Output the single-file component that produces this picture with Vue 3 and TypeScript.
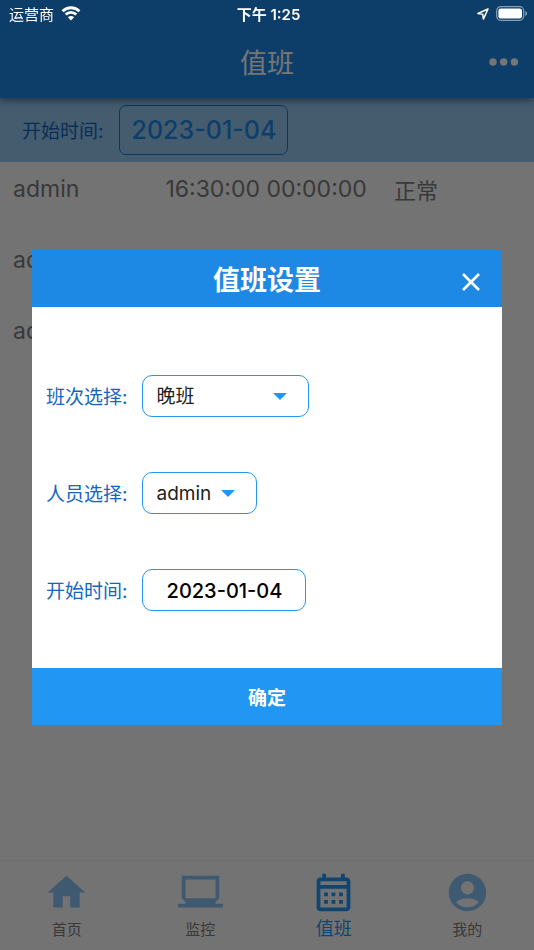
<script setup lang="ts">
import { ref } from 'vue'

interface Shift {
  name: string
  time: string
  state: string
}

interface Tab {
  label: string
  icon: string
}

const shifts: Shift[] = [
  { name: 'admin', time: '16:30:00 00:00:00', state: '正常' },
  { name: 'admin', time: '', state: '' },
  { name: 'admin', time: '', state: '' },
]

const tabs: Tab[] = [
  { label: '首页', icon: 'M10 20v-6h4v6h5v-8h3L12 3 2 12h3v8z' },
  { label: '监控', icon: 'M20 18v-1l2-2V3H2v12l2 2v1H0v2h24v-2h-4zM4 5h16v10H4V5z' },
  {
    label: '值班',
    icon: 'M19 4h-1V2h-2v2H8V2H6v2H5c-1.11 0-1.99.9-1.99 2L3 20c0 1.1.89 2 2 2h14c1.1 0 2-.9 2-2V6c0-1.1-.9-2-2-2zm0 16H5V10h14v10zm0-12H5V6h14v2zM9 14H7v-2h2v2zm4 0h-2v-2h2v2zm4 0h-2v-2h2v2zm-8 4H7v-2h2v2zm4 0h-2v-2h2v2zm4 0h-2v-2h2v2z',
  },
  {
    label: '我的',
    icon: 'M12 2C6.48 2 2 6.48 2 12s4.48 10 10 10 10-4.48 10-10S17.52 2 12 2zm0 4c1.93 0 3.5 1.57 3.5 3.5S13.93 13 12 13s-3.5-1.57-3.5-3.5S10.07 6 12 6zm0 14c-2.03 0-4.43-.82-6.14-2.88C7.55 15.8 9.68 15 12 15s4.45.8 6.14 2.12C16.43 19.18 14.03 20 12 20z',
  },
]

const activeTab = ref('值班')
const open = ref(true)
const filterDate = ref('2023-01-04')
const shift = ref('晚班')
const person = ref('admin')
const startDate = ref('2023-01-04')
</script>

<template>
  <div class="page">
    <div class="status">
      <div class="carrier">
        <span>运营商</span>
        <svg class="wifi" viewBox="0 0 20 15" aria-hidden="true">
          <path d="M1.6 5.2a12 12 0 0 1 16.8 0M4.7 8.5a7.5 7.5 0 0 1 10.6 0" />
          <path class="dot" d="M6.9 11.2a4.4 4.4 0 0 1 6.2 0L10 14.4z" />
        </svg>
      </div>
      <span class="clock">下午 1:25</span>
      <div class="power">
        <svg class="arrow" viewBox="0 0 12 12" aria-hidden="true">
          <path d="M11 1 .9 5.5l4.9.8.6 4.8z" />
        </svg>
        <svg class="battery" viewBox="0 0 32 15" aria-hidden="true">
          <rect class="shell" x="0.7" y="0.7" width="27" height="13.6" rx="4" />
          <rect class="charge" x="2.4" y="2.4" width="23.6" height="10.2" rx="2.4" />
          <path class="tip" d="M29.3 5v5c1.1-.4 1.8-1.4 1.8-2.5s-.7-2.1-1.8-2.5z" />
        </svg>
      </div>
    </div>

    <header class="bar">
      <h1>值班</h1>
      <button class="more" type="button" aria-label="更多" @click="open = true">
        <svg viewBox="0 0 30 8" aria-hidden="true">
          <circle cx="4" cy="4" r="3.7" />
          <circle cx="14.7" cy="4" r="3.7" />
          <circle cx="25.4" cy="4" r="3.7" />
        </svg>
      </button>
    </header>

    <div class="filter">
      <label for="filter-date">开始时间:</label>
      <input id="filter-date" v-model="filterDate" type="text" readonly />
    </div>

    <main class="list">
      <table>
        <tbody>
          <tr v-for="(row, i) in shifts" :key="i">
            <td class="name">{{ row.name }}</td>
            <td class="time">{{ row.time }}</td>
            <td class="state">{{ row.state }}</td>
          </tr>
        </tbody>
      </table>
    </main>

    <nav class="tabs">
      <button
        v-for="tab in tabs"
        :key="tab.label"
        type="button"
        class="tab"
        :class="{ active: tab.label === activeTab }"
        @click="activeTab = tab.label"
      >
        <svg viewBox="0 0 24 24" aria-hidden="true"><path :d="tab.icon" /></svg>
        <span>{{ tab.label }}</span>
      </button>
    </nav>

    <div v-if="open" class="scrim">
      <form class="dialog" role="dialog" aria-labelledby="dialog-title" @submit.prevent="open = false">
        <div class="dialog-head">
          <h2 id="dialog-title">值班设置</h2>
          <button class="close" type="button" aria-label="关闭" @click="open = false">
            <svg viewBox="0 0 20 20" aria-hidden="true"><path d="m2 2 16 16M18 2 2 18" /></svg>
          </button>
        </div>
        <div class="fields">
          <div class="field">
            <label for="shift">班次选择:</label>
            <div class="box wide">
              <select id="shift" v-model="shift">
                <option>晚班</option>
              </select>
              <svg viewBox="0 0 14 8" aria-hidden="true"><path d="M0 0h14L7 7z" /></svg>
            </div>
          </div>
          <div class="field">
            <label for="person">人员选择:</label>
            <div class="box">
              <select id="person" v-model="person">
                <option>admin</option>
              </select>
              <svg viewBox="0 0 14 8" aria-hidden="true"><path d="M0 0h14L7 7z" /></svg>
            </div>
          </div>
          <div class="field">
            <label for="start-date">开始时间:</label>
            <input id="start-date" v-model="startDate" class="date" type="text" readonly />
          </div>
        </div>
        <button class="confirm" type="submit">确定</button>
      </form>
    </div>
  </div>
</template>

<style>
body {
  margin: 0;
  background: #fafafa;
}
</style>

<style scoped>
.page {
  min-height: 100vh;
  display: flex;
  flex-direction: column;
  font-family: Inter, 'Noto Sans CJK SC', sans-serif;
  color: #7c7c7c;
  background: #fafafa;
}

.page *,
.page {
  box-sizing: border-box;
}

button,
input,
select {
  font-family: inherit;
  margin: 0;
}

button {
  border: 0;
  padding: 0;
  background: none;
  cursor: pointer;
}

h1,
h2 {
  grid-column: 2;
  margin: 0;
  padding-top: 4px;
  font-size: 27px;
  line-height: 36px;
}

svg {
  display: block;
}

.status {
  position: fixed;
  inset: 0 0 auto;
  z-index: 3;
  display: grid;
  grid-template-columns: 1fr auto 1fr;
  align-items: center;
  height: 27px;
  padding: 0 6px 0 9px;
  font-size: 15px;
  color: #fff;
}

.carrier,
.power {
  display: flex;
  align-items: center;
  gap: 7px;
}

.power {
  justify-content: flex-end;
}

.clock {
  font-weight: 600;
}

.wifi {
  width: 20px;
  height: 15px;
  fill: none;
  stroke: #fff;
  stroke-width: 2.8;
}

.wifi .dot {
  fill: #fff;
  stroke: none;
}

.arrow {
  width: 12px;
  height: 12px;
  fill: none;
  stroke: #fff;
  stroke-width: 1.5;
  stroke-linejoin: round;
}

.battery {
  width: 32px;
  height: 15px;
}

.shell {
  fill: none;
  stroke: #87a0b7;
  stroke-width: 1.2;
}

.charge {
  fill: #fff;
}

.tip {
  fill: #87a0b7;
}

.bar {
  position: relative;
  z-index: 1;
  display: grid;
  grid-template-columns: 1fr auto 1fr;
  align-items: center;
  height: 98px;
  padding: 26px 15px 0;
  background: #1e88e5;
  box-shadow: 0 2px 8px rgba(0, 0, 0, 0.5);
}

.bar h1 {
  font-weight: 400;
  color: #fff;
}

.more {
  justify-self: end;
  padding: 8px 0;
}

.more svg {
  width: 30px;
  height: 8px;
  fill: #fff;
}

.filter {
  display: flex;
  align-items: center;
  gap: 16px;
  height: 64px;
  padding: 0 22px;
  background: #96c8f2;
}

.filter label {
  padding-bottom: 2px;
  font-size: 19px;
  color: #1565c0;
}

.filter input {
  width: 169px;
  height: 50px;
  padding: 0;
  border: 1px solid #1976d2;
  border-radius: 7px;
  background: none;
  font-size: 25px;
  font-weight: 500;
  text-align: center;
  color: #1e88e5;
}

.list {
  flex: 1;
  padding: 0 13px;
}

table {
  width: 100%;
  border-collapse: collapse;
  table-layout: fixed;
}

td {
  height: 71px;
  padding: 11px 0 0;
  vertical-align: top;
  font-size: 23px;
  line-height: 32px;
  white-space: nowrap;
}

.name {
  width: 30%;
}

.time {
  width: 45%;
}

.state {
  padding-top: 13px;
  font-size: 22px;
}

.tabs {
  display: flex;
  height: 90px;
  border-top: 1px solid #f0f0f0;
}

.tab {
  flex: 1;
  display: flex;
  flex-direction: column;
  align-items: center;
  padding-top: 9px;
  gap: 2px;
  font-size: 15px;
  line-height: 26px;
  color: #7c7c7c;
}

.tab svg {
  width: 45px;
  height: 45px;
  fill: #87c2f5;
}

.tab.active {
  font-size: 18px;
  line-height: 24px;
  color: #2196f3;
}

.tab.active svg {
  fill: #2196f3;
}

.scrim {
  position: fixed;
  inset: 0;
  z-index: 2;
  display: flex;
  align-items: center;
  padding: 25px 32px 0;
  background: rgba(0, 0, 0, 0.54);
}

.dialog {
  flex: 1;
  background: #fff;
}

.dialog-head {
  display: grid;
  grid-template-columns: 1fr auto 1fr;
  align-items: center;
  height: 57px;
  padding: 0 21px;
  background: #1e88e5;
  color: #fff;
}

.dialog-head h2 {
  font-weight: 700;
}

.close {
  justify-self: end;
  padding-top: 6px;
}

.close svg {
  width: 20px;
  height: 20px;
  fill: none;
  stroke: #fff;
  stroke-width: 2.6;
}

.fields {
  display: flex;
  flex-direction: column;
  gap: 55px;
  padding: 68px 14px 57px;
}

.field {
  display: flex;
  align-items: center;
  gap: 15px;
}

.field label {
  padding-bottom: 2px;
  font-size: 19px;
  color: #1565c0;
}

.box {
  display: grid;
  align-items: center;
  width: 115px;
  height: 42px;
  border: 1px solid #2196f3;
  border-radius: 10px;
}

.box.wide {
  width: 167px;
}

.box select,
.box svg {
  grid-area: 1 / 1;
}

.box select {
  width: 100%;
  height: 40px;
  padding: 0 13px;
  border: 0;
  border-radius: 10px;
  appearance: none;
  background: none;
  font-size: 19px;
  color: #212121;
}

.box svg {
  width: 14px;
  height: 8px;
  justify-self: end;
  margin: 2px 21px 0 0;
  fill: #2196f3;
  pointer-events: none;
}

.date {
  width: 164px;
  height: 42px;
  padding: 2px 0 0;
  border: 1px solid #2196f3;
  border-radius: 10px;
  background: none;
  font-size: 20px;
  font-weight: 500;
  text-align: center;
  color: #000;
}

.confirm {
  display: block;
  width: 100%;
  height: 57px;
  background: #2196f3;
  font-size: 19px;
  font-weight: 700;
  color: #fff;
}
</style>
